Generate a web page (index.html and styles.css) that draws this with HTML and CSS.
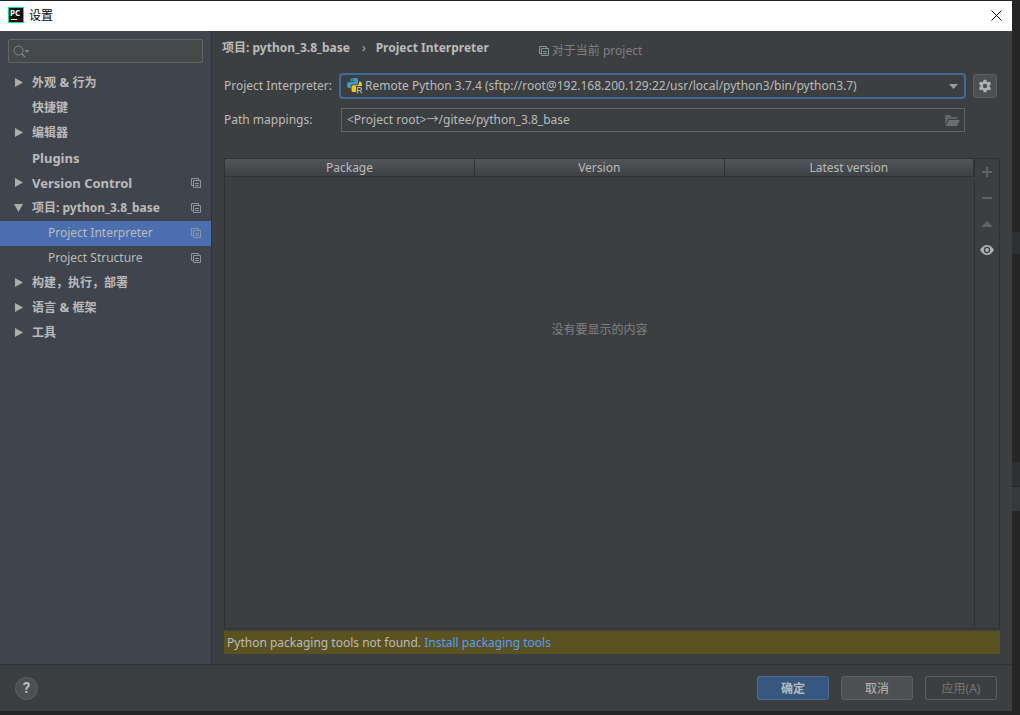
FILE: index.html
```html
<!DOCTYPE html>
<html lang="zh-CN">
<head>
<meta charset="utf-8">
<title>设置</title>
<link rel="stylesheet" href="styles.css">
</head>
<body>
<svg class="defs" aria-hidden="true">
  <symbol id="copy" viewBox="0 0 10 10"><path d="M2.500 7.500H.5V.5h7v2" fill="none" stroke="currentColor"/><path d="M2.500 2.500h7v7h-7zM4 5.500h4M4 7.500h4" fill="none" stroke="currentColor"/></symbol>
  <symbol id="right" viewBox="0 0 9 9"><path d="M1 0l8 4.500L1 9z" fill="currentColor"/></symbol>
  <symbol id="down" viewBox="0 0 9 9"><path d="M0 1h9L4.500 9z" fill="currentColor"/></symbol>
</svg>
<div class="window">
  <header class="titlebar">
    <svg class="logo" viewBox="0 0 16 16"><rect width="16" height="16" fill="#21d789"/><rect x="1" y="1" width="14" height="14" fill="#111"/><rect x="3" y="12" width="6" height="1" fill="#fff"/><text class="logo-text" x="2" y="9">PC</text></svg>
    <span class="title">设置</span>
    <button class="close" type="button" aria-label="关闭"><svg width="11" height="11" viewBox="0 0 11 11"><path d="M.5.5l10 10M10.500.5l-10 10" stroke="#000" fill="none"/></svg></button>
  </header>

  <div class="body">
    <aside class="sidebar">
      <label class="search">
        <svg width="17" height="13" viewBox="0 0 17 13"><circle cx="5.500" cy="5.500" r="4.500" fill="none" stroke="#7b868c"/><path d="M8.500 8.500l3.500 3.500" stroke="#7b868c" stroke-width="1.500"/><path d="M11.500 5h5L14 8z" fill="#7b868c"/></svg>
        <input type="text" aria-label="搜索">
      </label>
      <nav class="tree">
        <a class="row" href="#"><svg class="arrow"><use href="#right"/></svg><span class="name">外观<span class="latin"> &amp; </span>行为</span></a>
        <a class="row" href="#"><span class="arrow"></span><span class="name">快捷键</span></a>
        <a class="row" href="#"><svg class="arrow"><use href="#right"/></svg><span class="name">编辑器</span></a>
        <a class="row" href="#"><span class="arrow"></span><span class="name latin">Plugins</span></a>
        <a class="row" href="#"><svg class="arrow"><use href="#right"/></svg><span class="name latin">Version Control</span><svg class="copy"><use href="#copy"/></svg></a>
        <a class="row" href="#"><svg class="arrow"><use href="#down"/></svg><span class="name">项目: python_3.8_base</span><svg class="copy"><use href="#copy"/></svg></a>
        <a class="row child selected" href="#"><span class="name">Project Interpreter</span><svg class="copy"><use href="#copy"/></svg></a>
        <a class="row child" href="#"><span class="name">Project Structure</span><svg class="copy"><use href="#copy"/></svg></a>
        <a class="row" href="#"><svg class="arrow"><use href="#right"/></svg><span class="name">构建，执行，部署</span></a>
        <a class="row" href="#"><svg class="arrow"><use href="#right"/></svg><span class="name">语言<span class="latin"> &amp; </span>框架</span></a>
        <a class="row" href="#"><svg class="arrow"><use href="#right"/></svg><span class="name">工具</span></a>
      </nav>
    </aside>

    <main class="content">
      <div class="crumbs">
        <b>项目: python_3.8_base</b>
        <span class="sep">›</span>
        <b>Project Interpreter</b>
        <span class="scope"><svg class="copy"><use href="#copy"/></svg><span>对于当前 project</span></span>
      </div>

      <form class="form">
        <label for="interp">Project Interpreter:</label>
        <div class="combo">
          <svg class="python" viewBox="0 0 16 16"><path d="M7 0h2.500Q11 0 11 1.700V5Q11 6.500 9.500 6.500H5.500Q3.700 6.500 3.700 8.300V10H2Q0 10 0 7Q0 4 2 4H7.500V3.300H3.500V1.700Q3.500 0 7 0z" fill="#3e9ac9"/><path d="M12 3.800h1Q15 3.800 15 7.500V8H9v6H6Q4.500 14 4.500 12.500V9Q4.500 7.300 6 7.300h4Q12 7.300 12 5.500z" fill="#f5c518"/><circle cx="5.300" cy="1.800" r=".7" fill="#3c3f41"/><path d="M10.500 15V9.500H13q1.500 0 1.500 1.500T13 12.500h-2.500M12.800 12.500L15 15" fill="none" stroke="#3c3f41" stroke-width="3"/><path d="M10.500 15.500V9.500H13q1.500 0 1.500 1.500T13 12.500h-2.500M12.800 12.500L15 15.500" fill="none" stroke="#afb1b3" stroke-width="1.200"/></svg>
          <select id="interp"><option>Remote Python 3.7.4 (sftp://root@192.168.200.129:22/usr/local/python3/bin/python3.7)</option></select>
          <svg class="caret" viewBox="0 0 9 5"><path d="M0 0h9L4.500 5z" fill="#9a9da0"/></svg>
        </div>
        <button class="gear" type="button" aria-label="配置"><svg width="14" height="14" viewBox="0 0 14 14"><path fill="#afb1b3" fill-rule="evenodd" d="M5.600.8h2.800l.4 1.900 1.100.6 1.800-.7 1.400 2.400-1.500 1.300v1.400l1.500 1.300-1.400 2.400-1.800-.7-1.100.6-.4 1.900H5.600l-.4-1.900-1.100-.6-1.800.7L.9 9l1.500-1.300V6.300L.9 5l1.400-2.400 1.800.7 1.100-.6zM7 4.800a2.200 2.200 0 1 0 0 4.400a2.200 2.200 0 1 0 0-4.400z"/></svg></button>
        <label for="path">Path mappings:</label>
        <div class="field">
          <input id="path" type="text" value="&lt;Project root&gt;→/gitee/python_3.8_base">
          <svg width="15" height="12" viewBox="0 0 15 12"><path d="M0 11V1h5l1.500 2H12v2H3.500z" fill="#5f6467"/><path d="M4 6h11l-3 6H.8z" fill="#6a6f72"/></svg>
        </div>
      </form>

      <div class="packages">
        <div class="list">
          <table>
            <thead><tr><th>Package</th><th>Version</th><th>Latest version</th></tr></thead>
          </table>
          <p class="empty">没有要显示的内容</p>
        </div>
        <div class="tools">
          <button type="button" aria-label="添加"><svg viewBox="0 0 12 12"><path d="M6 1v10M1 6h10" stroke="#5f6163" stroke-width="2"/></svg></button>
          <button type="button" aria-label="移除"><svg viewBox="0 0 12 12"><path d="M1 6h10" stroke="#5f6163" stroke-width="2"/></svg></button>
          <button type="button" aria-label="升级"><svg viewBox="0 0 12 12"><path d="M6 3l6 6H0z" fill="#5f6163"/></svg></button>
          <button type="button" aria-label="显示预发布版本"><svg class="eye" viewBox="0 0 14 12"><path d="M0 6Q3 1 7 1t7 5Q11 11 7 11T0 6z" fill="#afb1b3"/><circle cx="7" cy="6" r="3.200" fill="#3c3f41"/><circle cx="7" cy="6" r="1.900" fill="#afb1b3"/></svg></button>
        </div>
      </div>

      <div class="banner">Python packaging tools not found. <a href="#">Install packaging tools</a></div>
    </main>
  </div>

  <footer class="footer">
    <button class="help" type="button" aria-label="帮助">?</button>
    <button class="btn primary" type="button">确定</button>
    <button class="btn" type="button">取消</button>
    <button class="btn" type="button" disabled>应用(A)</button>
  </footer>
</div>
<div class="backdrop"><i class="strip first"></i><i class="strip second"></i><i class="strip third"></i></div>
</body>
</html>
```

FILE: styles.css
```css
* { box-sizing: border-box; }

body {
  margin: 0;
  height: 100vh;
  padding: 1px 0 4px;
  display: flex;
  background: #252526;
  color: #bbbbbb;
  font: 12px/18px "Noto Sans", "Noto Sans CJK SC", sans-serif;
}

button, input, select { font: inherit; color: inherit; }
a { text-decoration: none; }
.defs { position: absolute; width: 0; height: 0; }

.window {
  flex: 1;
  min-width: 0;
  display: flex;
  flex-direction: column;
  background: #3c3f41;
}

.backdrop { width: 8px; display: flex; flex-direction: column; }
.strip { height: 24px; background: #2f3031; }
.first { margin-top: 231px; height: 22px; }
.second { margin-top: 208px; }
.third { margin-top: 1px; background: #36393c; }

.titlebar {
  height: 30px;
  padding: 0 10px 0 8px;
  display: flex;
  align-items: center;
  gap: 5px;
  background: #ffffff;
  color: #000000;
}
.logo { width: 16px; height: 16px; margin-bottom: 2px; }
.logo-text { font: bold 8px "Open Sans", sans-serif; fill: #ffffff; }
.close {
  margin: 0 0 1px auto;
  padding: 0;
  border: 0;
  background: none;
  display: flex;
}

.body { flex: 1; min-height: 0; display: flex; }

.sidebar {
  width: 212px;
  border-right: 1px solid #323232;
  background: #40444d;
}
.search {
  height: 24px;
  margin: 8px;
  padding: 0 4px;
  display: flex;
  align-items: center;
  border: 1px solid #646464;
  border-radius: 2px;
  background: #45494a;
}
.search input { flex: 1; min-width: 0; border: 0; background: none; outline: 0; }

.row {
  height: 25px;
  padding: 0 10px 2px 14px;
  display: flex;
  align-items: center;
  color: #bbbbbb;
  font-weight: bold;
}
.latin { font-size: 13px; line-height: 16px; }
.arrow { width: 9px; height: 9px; margin-right: 9px; color: #adadad; }
.name { flex: 1; white-space: nowrap; }
.copy { width: 10px; height: 10px; color: #8c969d; }
.child { padding-left: 48px; font-weight: normal; }
.selected { background: #4b6eaf; }

.content {
  flex: 1;
  min-width: 0;
  padding: 8px 12px 10px;
  display: flex;
  flex-direction: column;
}

.crumbs { height: 26px; margin-left: -2px; display: flex; align-items: flex-start; }
.sep { margin: 0 10px 0 12px; }
.scope { margin: 3px 0 0 50px; display: flex; align-items: center; gap: 3px; color: #808080; }

.form {
  margin: 8px 3px 0 0;
  display: grid;
  grid-template-columns: 115px 1fr 24px;
  grid-template-rows: 26px 26px;
  row-gap: 8px;
  align-items: center;
}
.form label { white-space: nowrap; }
.combo {
  height: 26px;
  margin-right: 7px;
  padding: 0 6px;
  display: flex;
  align-items: center;
  border: 2px solid #3f6a99;
  border-radius: 4px;
  background: #3c3f41;
}
.python { width: 16px; height: 16px; flex: none; }
.combo select {
  flex: 1;
  min-width: 0;
  padding: 0 0 0 2px;
  border: 0;
  appearance: none;
  background: none;
  outline: 0;
}
.caret { width: 9px; height: 5px; }
.gear {
  width: 24px;
  height: 24px;
  padding: 0;
  display: grid;
  place-items: center;
  border: 1px solid #5e6060;
  border-radius: 3px;
  background: #4c5052;
}
.field {
  height: 24px;
  margin: 0 8px 0 2px;
  padding: 0 4px 0 5px;
  display: flex;
  align-items: center;
  border: 1px solid #646464;
}
.field input { flex: 1; min-width: 0; padding: 0; border: 0; background: none; outline: 0; }

.packages {
  flex: 1;
  min-height: 0;
  margin-top: 25px;
  display: flex;
  border: 1px solid #323232;
}
.list { flex: 1; display: flex; flex-direction: column; }
table { width: 100%; table-layout: fixed; border-collapse: collapse; }
th {
  height: 17px;
  padding: 1px 0 0;
  line-height: 16px;
  font-weight: normal;
  border-right: 1px solid #323232;
  border-bottom: 1px solid #323232;
  background: linear-gradient(#525658, #3e4143);
}
.empty { margin: 144px 0 0; text-align: center; color: #808080; }
.tools {
  width: 25px;
  padding-top: 7px;
  display: flex;
  flex-direction: column;
  align-items: center;
  gap: 14px;
  border-left: 1px solid #323232;
}
.tools button { height: 12px; padding: 0; border: 0; background: none; display: flex; }
.tools svg { width: 12px; height: 12px; }
.tools .eye { width: 14px; }

.banner { height: 23px; margin-top: 2px; padding: 0 3px; line-height: 23px; background: #5a5221; }
.banner a { color: #589df6; }

.footer {
  height: 47px;
  padding: 0 15px;
  display: flex;
  align-items: center;
  gap: 12px;
  border-top: 1px solid #323232;
}
.help {
  width: 23px;
  height: 23px;
  margin-right: auto;
  padding: 0;
  border: 1px solid #5e6060;
  border-radius: 50%;
  background: #4c5052;
  font: bold 15px/20px Roboto, sans-serif;
}
.btn {
  width: 72px;
  height: 24px;
  padding: 1px 0 0;
  border: 1px solid #5e6060;
  border-radius: 3px;
  background: #4c5052;
}
.primary { border-color: #4c708c; background: #365880; font-weight: bold; }
.btn:disabled { background: none; color: #777777; }
```
